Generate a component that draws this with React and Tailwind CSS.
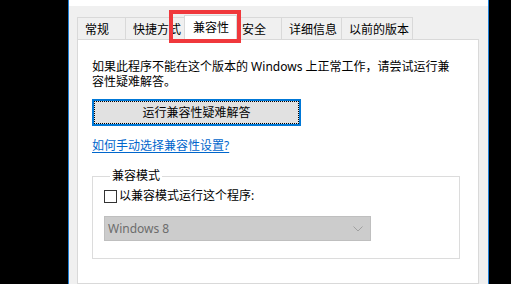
import React from 'react';

const tabs = [
  { label: '常规', cls: 'w-[49px]' },
  { label: '快捷方式', cls: '-ml-px w-[62px]' },
  { label: '兼容性', cls: 'ml-[-3px] w-[53px]', active: true },
  { label: '安全', cls: 'ml-[-3px] w-[48px]' },
  { label: '详细信息', cls: '-ml-px w-[61px]' },
  { label: '以前的版本', cls: '-ml-px w-[72px]' },
];

function Tab({ label, cls, active }) {
  if (active) {
    return (
      <div
        className={`${cls} relative z-10 h-[25px] mb-[-1px] bg-white border-x border-t border-[#d9d9d9] pl-[8px] pt-[5px] leading-[14px] text-[12px]`}
      >
        {label}
      </div>
    );
  }
  return (
    <div
      className={`${cls} h-[22px] bg-[#f0f0f0] border-x border-t border-[#d9d9d9] pl-[7px] pt-[5px] leading-[14px] text-[12px]`}
    >
      {label}
    </div>
  );
}

export default function App() {
  return (
    <div className="w-[511px] h-[284px] bg-black flex overflow-hidden font-['Noto_Sans','Noto_Sans_CJK_SC',sans-serif] text-black">
      <div className="w-[68px] shrink-0" />

      {/* dialog window */}
      <div className="relative w-[421px] shrink-0 h-full border-x border-[#1e7fd6] bg-[#f0f0f0] flex flex-col">
        <div className="h-[6px] bg-white" />

        {/* tab strip */}
        <div className="flex items-end h-[24px] mt-[9px] pl-[8px]">
          {tabs.map((t) => (
            <Tab key={t.label} {...t} />
          ))}
        </div>

        {/* tab page */}
        <div className="ml-[8px] w-[402px] flex-1 bg-white border border-[#d9d9d9] pl-[14px] pt-[19px] text-[12px]">
          <p className="leading-[15px] whitespace-nowrap">
            如果此程序不能在这个版本的 Windows 上正常工作，请尝试运行兼
            <br />
            容性疑难解答。
          </p>

          <div className="mt-[10px] w-[209px] h-[27px] border-2 border-[#0078d7] bg-[#e1e1e1]">
            <div className="h-full border border-dotted border-black flex items-center justify-center leading-none">
              运行兼容性疑难解答
            </div>
          </div>

          <a className="block mt-[12px] leading-[15px] text-[#0066cc] underline underline-offset-2 w-fit">
            如何手动选择兼容性设置?
          </a>

          <fieldset className="mt-[15px] w-[368px] border border-[#dcdcdc] pl-[11px] pb-[17px]">
            <legend className="ml-[6px] px-[2px] leading-[16px]">兼容模式</legend>
            <label className="flex items-center gap-[2px] mt-[4px] leading-[16px]">
              <span className="w-[13px] h-[13px] border border-[#333333] bg-white" />
              <span>以兼容模式运行这个程序:</span>
            </label>
            <div className="mt-[12px] w-[267px] h-[25px] bg-[#cccccc] border border-[#bfbfbf] flex items-center justify-between pl-[3px] pr-[7px] text-[#6d6d6d]">
              <span className="leading-none">Windows 8</span>
              <svg width="10" height="6" viewBox="0 0 10 6" fill="none">
                <path d="M0.5 0.5 L5 5 L9.5 0.5" stroke="#a0a0a0" strokeWidth="1" />
              </svg>
            </div>
          </fieldset>
        </div>

        {/* red highlight round the active tab */}
        <div className="absolute left-[100px] top-[10px] w-[72px] h-[33px] border-[4px] border-[#f0383c] z-20" />
      </div>
    </div>
  );
}
